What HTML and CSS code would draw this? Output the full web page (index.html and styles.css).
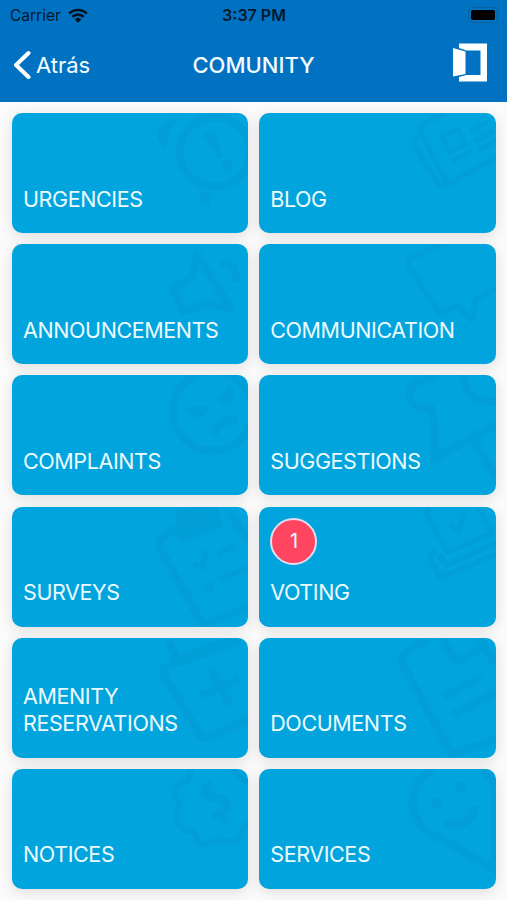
FILE: index.html
```html
<!DOCTYPE html>
<html lang="en">
<head>
	<meta charset="UTF-8">
	<title>Comunity</title>
	<meta name="viewport" content="width=device-width,user-scalable=no">
	<link rel="stylesheet" href="styles.css">
</head>
<body>
	<header class="top">
		<div class="status">
			<div class="carrier">
				<span>Carrier</span>
				<svg class="wifi" viewBox="0 0 20 15">
					<path d="M1.2 5.6a12.6 12.6 0 0 1 17.6 0M4.3 8.9a8.2 8.2 0 0 1 11.4 0"/>
					<path class="solid" d="M6.6 11.4a5 5 0 0 1 6.8 0L10 14.8z"/>
				</svg>
			</div>
			<b class="time">3:37 PM</b>
			<div class="battery"><i></i></div>
		</div>
		<nav class="bar">
			<a class="back" href="javascript:;">
				<svg viewBox="0 0 18 30"><path d="M15.5 3L3 15l12.500 12"/></svg>
				<span>Atrás</span>
			</a>
			<h1>COMUNITY</h1>
			<a class="exit" href="javascript:;">
				<svg viewBox="0 0 35 39">
					<path d="M6 0.500H34V38.500H6V34L13.500 32H27.500V7.500H13.500L6 5z"/>
					<path d="M0 5L12.500 8.500V31L0 33.500z"/>
				</svg>
			</a>
		</nav>
	</header>
	<main class="list">
		<a class="card" href="javascript:;">
			<svg class="pic" viewBox="0 0 100 120">
				<circle cx="67" cy="39" r="35"/>
				<path class="solid" d="M30 6C15 6 5 17 10 27L18 36C19 24 22 17 30 6z"/>
				<path class="solid" d="M55 22Q60 14 67 20L75 43Q73 48 69 44z"/>
				<circle class="solid" cx="79" cy="53" r="6"/>
				<path class="solid" d="M53 78L64 82L61 93L51 90z"/>
			</svg>
			<span>URGENCIES</span>
		</a>
		<a class="card" href="javascript:;">
			<svg class="pic thin" viewBox="0 0 100 120">
				<path d="M48 0L28 11Q23 15 26 22L49 66Q52 72 58 68L100 45M26 22L20 25Q16 28 19 33L39 67Q44 75 52 71"/>
				<path d="M46 23L61 16L69 31L53 39zM55 49L76 38M74 18L91 9M79 28L98 18M82 37L100 28"/>
			</svg>
			<span>BLOG</span>
		</a>
		<a class="card" href="javascript:;">
			<svg class="pic" viewBox="0 0 100 120">
				<path d="M49 10L82 64L59 60L36 67L25 45L44 34z"/>
				<path d="M73 19Q89 19 88 37"/>
			</svg>
			<span>ANNOUNCEMENTS</span>
		</a>
		<a class="card" href="javascript:;">
			<svg class="pic thin" viewBox="0 0 100 120">
				<path d="M45 0L15 14Q10 17 14 24L42 67Q45 71 50 68L61 62L76 76L80 56L100 44"/>
			</svg>
			<span>COMMUNICATION</span>
		</a>
		<a class="card" href="javascript:;">
			<svg class="pic" viewBox="0 0 100 120">
				<circle cx="65" cy="36" r="40"/>
				<path class="solid" d="M37 34Q52 28 61 32Q57 44 49 43Q44 37 37 37zM81 9L86 16Q84 22 84 27Q75 32 69 25Q70 20 78 17z"/>
				<path d="M66 60Q70 42 89 46"/>
			</svg>
			<span>COMPLAINTS</span>
		</a>
		<a class="card" href="javascript:;">
			<svg class="pic" viewBox="0 0 100 120">
				<path d="M41 0L20 8Q8 17 16 27Q21 34 35 33Q42 58 37 84L100 50"/>
				<path d="M67 0Q69 22 84 25L100 27M77 64L100 103"/>
			</svg>
			<span>SUGGESTIONS</span>
		</a>
		<a class="card" href="javascript:;">
			<svg class="pic" viewBox="0 0 100 120">
				<path d="M29 22L15 30Q9 35 13 43L55 118L100 100M82 6L100 34"/>
				<path class="solid" d="M28 3L40 0H69L76 20L34 36L28 27z"/>
				<path class="line" d="M45 57L54 60L59 43M70 47L87 39M72 73L100 61"/>
				<circle class="solid" cx="61" cy="80" r="5"/>
			</svg>
			<span>SURVEYS</span>
		</a>
		<a class="card" href="javascript:;">
			<i class="badge">1</i>
			<svg class="pic thin" viewBox="0 0 100 120">
				<path d="M34 0L29 5L52 45L96 26L82 0"/>
				<path d="M54 18L63 24L69 6M40 44L35 48Q33 51 36 56L45 71L100 47M43 48L51 58L100 36"/>
			</svg>
			<span>VOTING</span>
		</a>
		<a class="card" href="javascript:;">
			<svg class="pic" viewBox="0 0 100 120">
				<path d="M92 3L20 28Q14 31 17 38L51 96Q55 102 62 99L100 82"/>
				<path d="M20 3L29 19M23 23L88 0M53 58L91 41M62 30L82 68"/>
			</svg>
			<span>AMENITY<br>RESERVATIONS</span>
		</a>
		<a class="card" href="javascript:;">
			<svg class="pic" viewBox="0 0 100 120">
				<path d="M32 0L8 16Q3 20 7 27L56 117L100 101"/>
				<path d="M46 0L60 24L92 7M82 0L100 26M47 59L85 39M57 77L100 54"/>
			</svg>
			<span>DOCUMENTS</span>
		</a>
		<a class="card" href="javascript:;">
			<svg class="pic" viewBox="0 0 100 120">
				<path class="line" d="M42 0Q43 11 35 14Q25 18 27 28L32 36Q26 48 31 56Q36 62 46 62Q49 76 60 75Q71 68 82 73Q95 72 94 60L100 54M84 0L100 15"/>
				<path d="M64 14Q51 22 61 29Q79 27 79 38Q76 44 68 46L80 52M57 20L66 29"/>
			</svg>
			<span>NOTICES</span>
		</a>
		<a class="card" href="javascript:;">
			<svg class="pic" viewBox="0 0 100 120">
				<path d="M36 0Q9 20 20 48Q26 63 43 69L99 100V18Q94 4 84 0"/>
				<circle class="solid" cx="41" cy="34" r="5"/>
				<circle class="solid" cx="65" cy="18" r="5"/>
				<path d="M49 54Q76 60 79 37"/>
			</svg>
			<span>SERVICES</span>
		</a>
	</main>
</body>
</html>
```
FILE: styles.css
```css
html{
	overflow: hidden;
}
body{
	margin: 0;
	height: 900px;
	overflow: hidden;
	background: #fbfbfb;
	font-family: Inter, "Liberation Sans", sans-serif;
}
a{
	color: inherit;
	text-decoration: none;
}
.top{
	height: 102px;
	background: #0072c1;
	color: #f4fcff;
}
.status{
	display: grid;
	grid-template-columns: 1fr auto 1fr;
	align-items: center;
	height: 30px;
	padding: 0 9px 0 10px;
	color: #06182b;
	font-size: 15.500px;
}
.carrier{
	display: flex;
	align-items: center;
	gap: 7px;
}
.wifi{
	width: 20px;
	height: 15px;
	fill: none;
	stroke: #06121f;
	stroke-width: 2.6;
}
.wifi .solid{
	fill: #06121f;
	stroke: none;
}
.time{
	font-weight: 600;
	font-size: 16px;
}
.battery{
	justify-self: end;
	padding: 2px;
	border: 1px solid #0860a0;
	border-radius: 5px;
}
.battery i{
	display: block;
	width: 24px;
	height: 10px;
	border-radius: 2px;
	background: #000;
}
.bar{
	display: grid;
	grid-template-columns: 1fr auto 1fr;
	align-items: center;
	height: 70px;
	padding: 0 19px 0 13px;
}
.back{
	display: flex;
	align-items: center;
	gap: 5px;
	font-size: 22px;
}
.back svg{
	width: 18px;
	height: 30px;
	fill: none;
	stroke: #fff;
	stroke-width: 4;
	stroke-linecap: round;
	stroke-linejoin: round;
}
h1{
	margin: 0 -3px 0 3px;
	font-size: 22px;
	font-weight: 500;
}
.exit{
	justify-self: end;
}
.exit svg{
	display: block;
	width: 35px;
	height: 39px;
	margin-top: -6px;
	fill: #fff;
}
.list{
	display: grid;
	grid-template-columns: 1fr 1fr;
	grid-auto-rows: 120px;
	gap: 11.200px 11px;
	padding: 11px 11.500px 11px 12px;
}
.card{
	position: relative;
	display: flex;
	align-items: flex-end;
	box-sizing: border-box;
	padding: 0 11px 20.500px;
	border-radius: 10px;
	background: #02a4dd;
	box-shadow: 0 3px 14px rgba(0,0,0,.12);
	color: #ecfbff;
	font-size: 21.500px;
	line-height: 27px;
	letter-spacing: -.4px;
}
.card span{
	position: relative;
}
.pic{
	position: absolute;
	top: 0;
	right: 0;
	width: 100px;
	height: 120px;
	border-radius: 0 10px 10px 0;
	fill: none;
	stroke: #0075b0;
	stroke-width: 8;
	stroke-linejoin: round;
	opacity: .12;
}
.pic.thin{
	stroke-width: 5.500;
}
.pic .line{
	stroke-width: 6;
}
.pic .solid{
	fill: #0075b0;
	stroke: none;
}
.badge{
	position: absolute;
	top: 11px;
	left: 11px;
	box-sizing: border-box;
	width: 47px;
	height: 47px;
	border: 2px solid #e4dcf0;
	border-radius: 50%;
	background: #ff4560;
	font-size: 20px;
	font-style: normal;
	line-height: 43px;
	text-align: center;
}
```
